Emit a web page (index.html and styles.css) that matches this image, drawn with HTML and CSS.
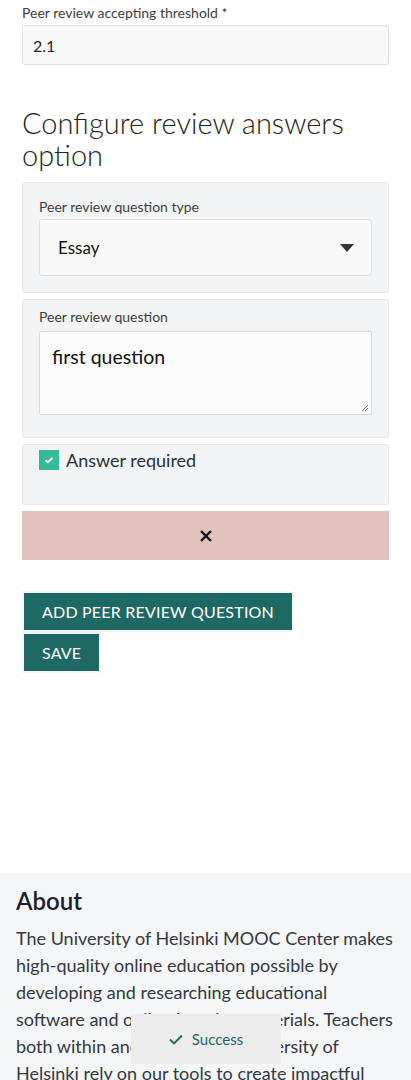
FILE: index.html
```html
<!DOCTYPE html>
<html>
<head>
<meta charset="utf-8">
<link rel="stylesheet" href="styles.css">
</head>
<body>
<main class="content">
  <div class="field">
    <label class="label">Peer review accepting threshold *</label>
    <div class="input">2.1</div>
  </div>
  <h2 class="heading">Configure review answers option</h2>
  <div class="card card-select">
    <label class="label small">Peer review question type</label>
    <div class="select">
      <span>Essay</span>
      <svg class="caret" width="14" height="8" viewBox="0 0 14 8"><path d="M0 0h14L7 8z" fill="#333"/></svg>
    </div>
  </div>
  <div class="card card-text">
    <label class="label small">Peer review question</label>
    <div class="textarea">first question
      <svg class="grip" width="8" height="8" viewBox="0 0 8 8"><path d="M7 1L1 7M7 4L4 7" stroke="#777" stroke-width="1"/></svg>
    </div>
  </div>
  <div class="card check-card">
    <div class="check-row">
      <span class="checkbox"><svg width="10" height="8" viewBox="0 0 10 8"><path d="M1.5 4.2L3.8 6.2 8.5 1.8" fill="none" stroke="#fff" stroke-width="1.8"/></svg></span>
      <span class="check-label">Answer required</span>
    </div>
  </div>
  <div class="delete-bar">
    <svg width="14" height="14" viewBox="0 0 14 14"><path d="M2 2L12 12M12 2L2 12" stroke="#111" stroke-width="2.4"/></svg>
  </div>
  <div class="actions">
    <button class="btn">ADD PEER REVIEW QUESTION</button>
    <button class="btn">SAVE</button>
  </div>
</main>
<footer class="footer">
  <h3 class="about-title">About</h3>
  <p class="about-text">The University of Helsinki MOOC Center makes high-quality online education possible by developing and researching educational software and online learning materials. Teachers both within and outside the University of Helsinki rely on our tools to create impactful courses.</p>
  <div class="toast">
    <svg width="14" height="11" viewBox="0 0 14 11"><path d="M1 5.5L5 9.5 13 1.5" fill="none" stroke="#1f6964" stroke-width="1.8"/></svg>
    <span>Success</span>
  </div>
</footer>
</body>
</html>
```

FILE: styles.css
```css
* { box-sizing: border-box; }
html, body { margin: 0; padding: 0; }
body {
  font-family: Lato, "Liberation Sans", sans-serif;
  color: #1a202c;
  background: #fff;
  width: 411px;
  height: 1080px;
  overflow: hidden;
}
.content {
  padding: 5px 22px 0 22px;
  height: 873px;
}
.field { display: flex; flex-direction: column; }
.label {
  font-size: 14px;
  font-weight: 400;
  color: #3d3d3d;
  line-height: 16px;
  margin-bottom: 4px;
}
.input {
  height: 40px;
  background: #f9f9f9;
  border: 1px solid #e0e0e0;
  border-radius: 3px;
  font-size: 16px;
  color: #222;
  padding: 0 10px;
  display: flex;
  align-items: center;
}
.heading {
  font-family: Lato, sans-serif;
  font-weight: 300;
  font-size: 29px;
  line-height: 32px;
  color: #222;
  margin: 42px 0 11px 0;
}
.card {
  background: #f3f4f6;
  border: 1px solid #e4e6ea;
  border-radius: 3px;
  margin-bottom: 6px;
}
.label.small { display: block; margin-bottom: 4px; }
.card-select { padding: 16px 16px 16px 16px; }
.card-text { padding: 9px 16px 22px 16px; }
.card-text .label.small { margin-bottom: 6px; }
.select {
  height: 57px;
  background: #f9f9f9;
  border: 1px solid #dedede;
  border-radius: 3px;
  display: flex;
  align-items: center;
  justify-content: space-between;
  padding: 0 17px 0 18px;
  font-size: 17px;
  color: #111;
}
.textarea {
  position: relative;
  height: 84px;
  background: #fbfbfb;
  border: 1px solid #d9d9d9;
  border-radius: 2px;
  padding: 13px 12px;
  font-size: 19.5px;
  color: #111;
  line-height: 24px;
}
.grip { position: absolute; right: 2px; bottom: 2px; }
.check-card { padding: 4px 16px 0 16px; height: 61px; }
.check-row { display: flex; align-items: center; gap: 7px; }
.checkbox {
  width: 20px; height: 20px;
  background: #35bb97;
  display: flex; align-items: center; justify-content: center;
}
.check-label { font-size: 18px; color: #2a2f3a; }
.delete-bar {
  height: 49px;
  background: #e0c1bb;
  display: flex;
  align-items: center;
  justify-content: center;
}
.actions {
  margin-top: 31px;
  display: flex;
  flex-direction: column;
  align-items: flex-start;
}
.btn {
  font-family: Lato, sans-serif;
  font-size: 16px;
  letter-spacing: 0.2px;
  color: #fff;
  background: #1f6964;
  border: 2px solid #f5f5f5;
  border-radius: 0;
  padding: 0 18px;
  height: 41px;
}
.footer {
  position: relative;
  background: #f5f6f8;
  padding: 12px 16px 0 16px;
  height: 207px;
}
.about-title {
  font-size: 24px;
  font-weight: 600;
  margin: 0 0 8px 0;
  line-height: 32px;
  color: #1a202c;
}
.about-text {
  margin: 0;
  font-size: 18px;
  line-height: 27px;
  color: #333842;
}
.toast {
  position: absolute;
  left: 131px;
  top: 141px;
  width: 150px;
  height: 50px;
  background: #ececed;
  display: flex;
  align-items: center;
  justify-content: center;
  gap: 9px;
  font-size: 15px;
  color: #1f6964;
}
```
